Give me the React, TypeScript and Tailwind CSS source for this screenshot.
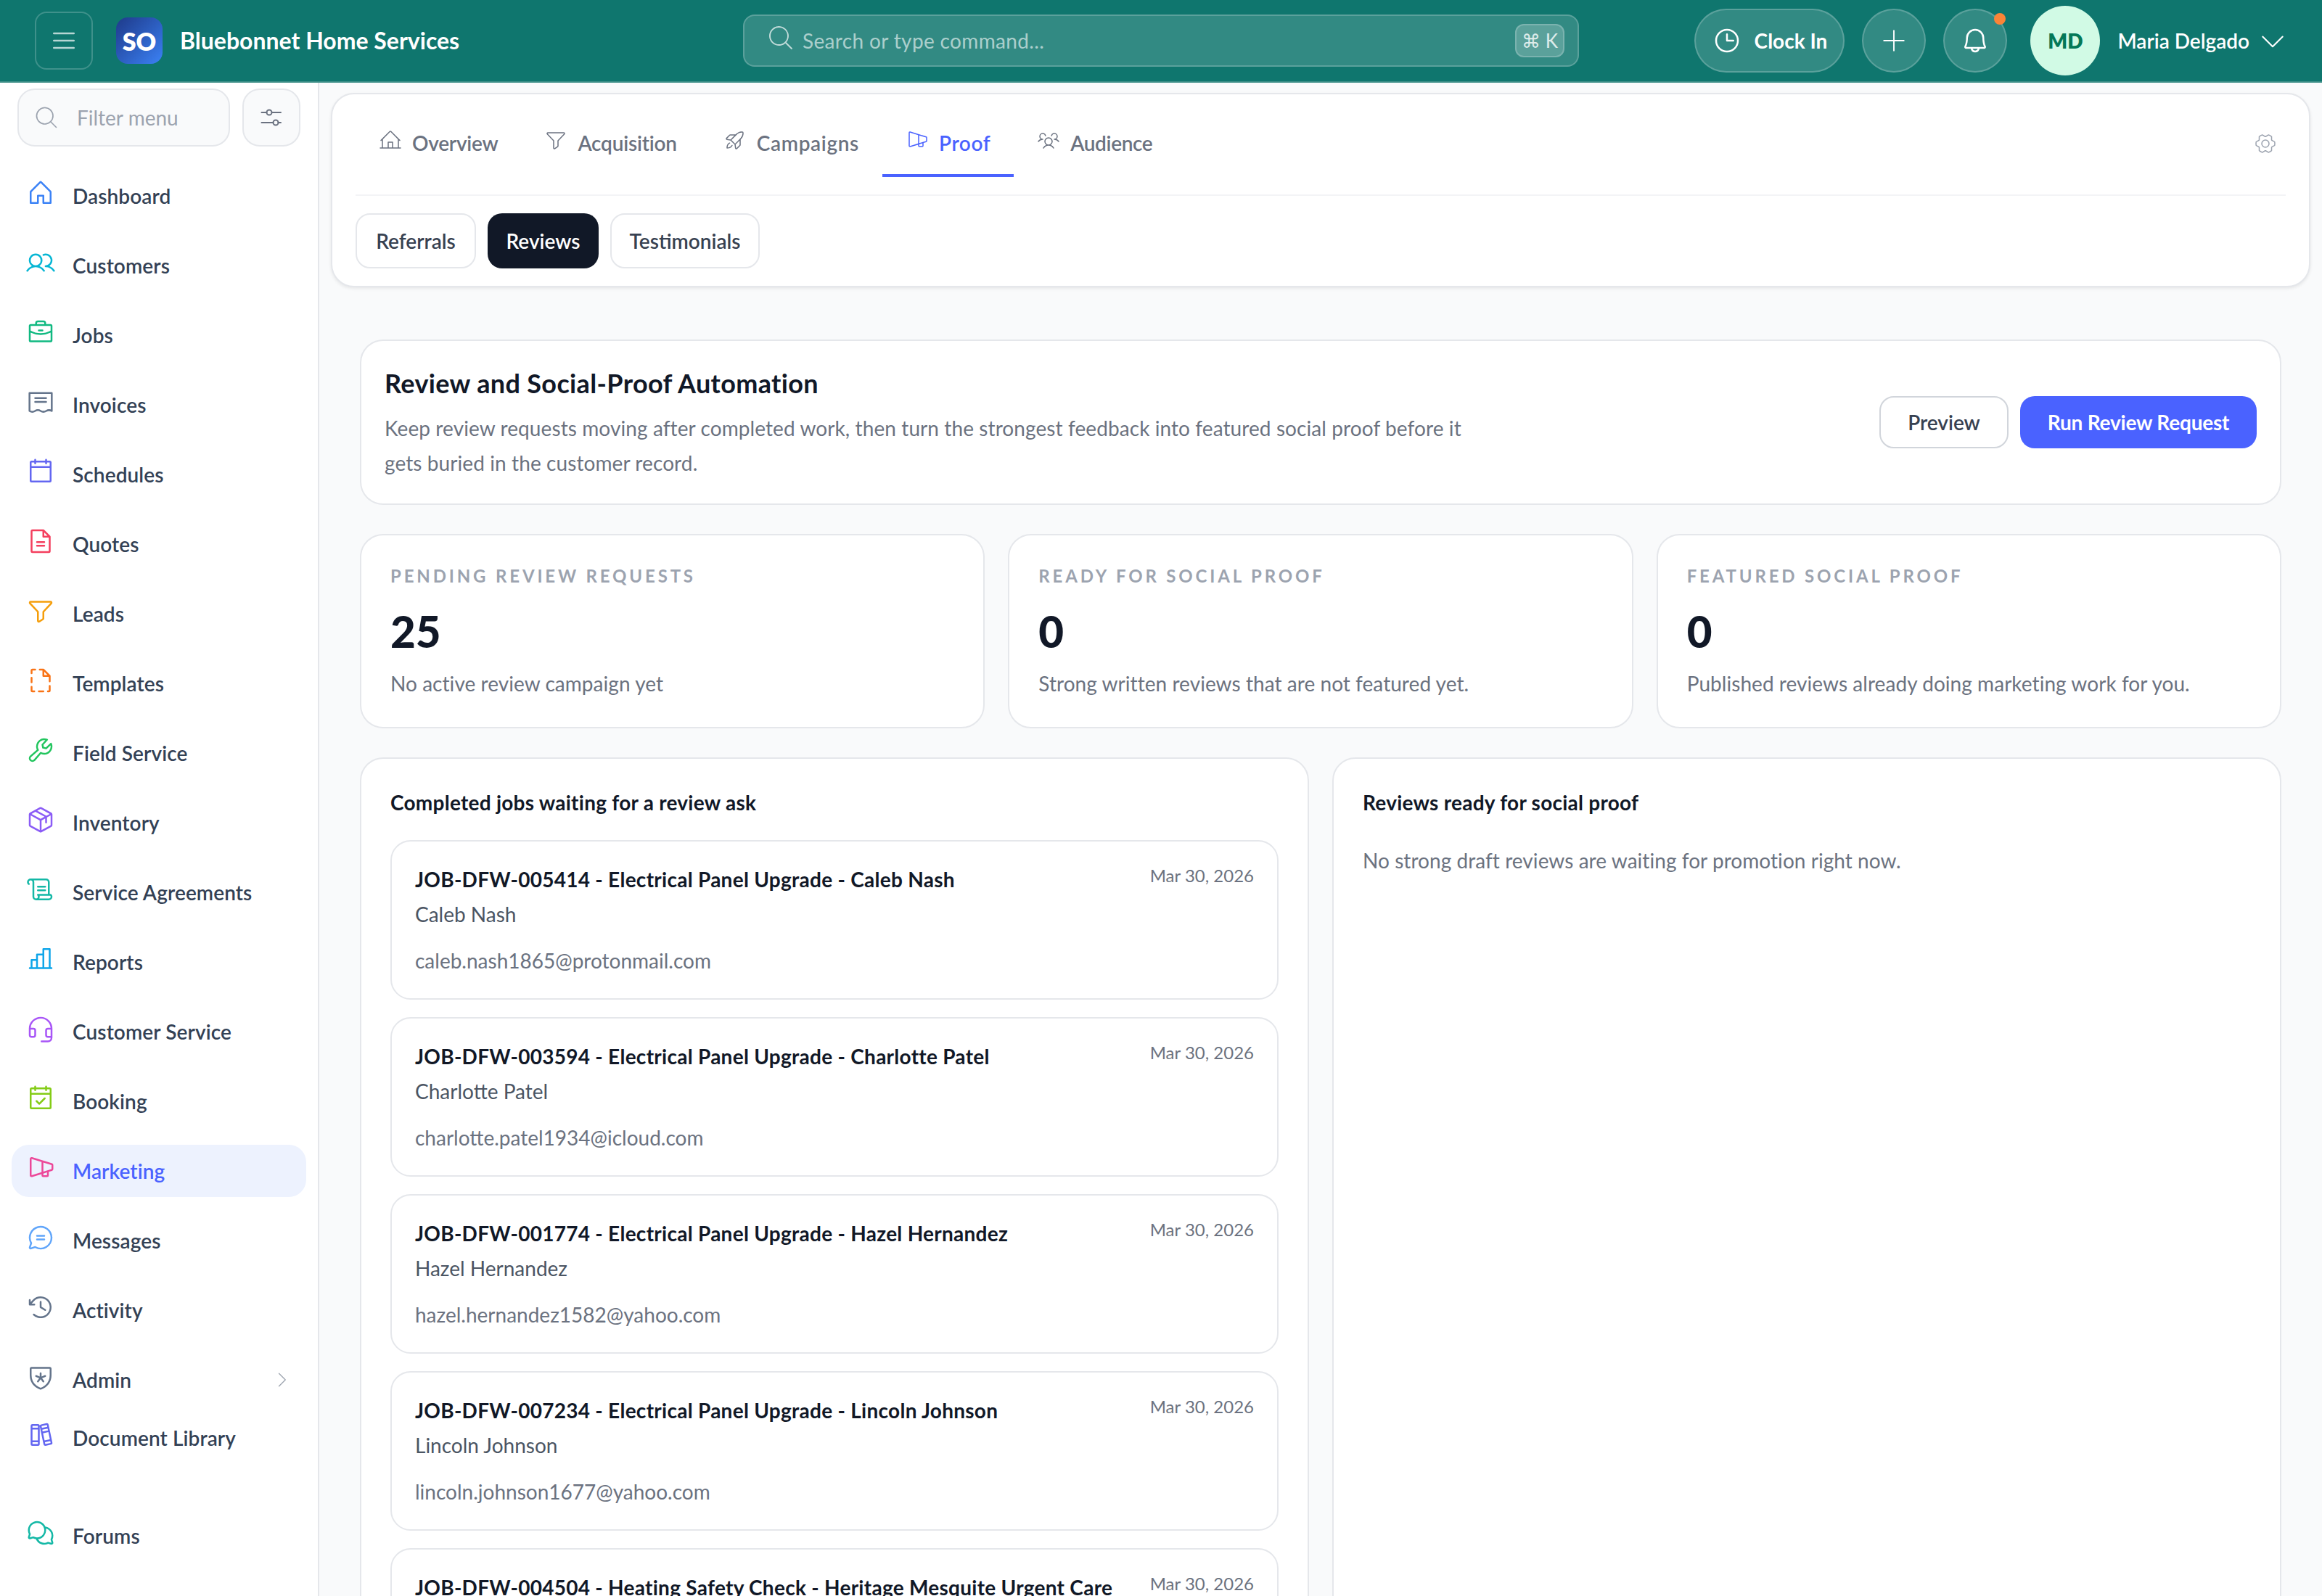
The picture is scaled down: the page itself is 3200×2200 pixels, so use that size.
import type { ComponentType } from "react"
import {
  PiBell,
  PiBooks,
  PiBriefcase,
  PiCalendarBlank,
  PiCalendarCheck,
  PiCaretDownLight,
  PiCaretRightLight,
  PiChartBar,
  PiChatCircleText,
  PiChatsCircle,
  PiClock,
  PiClockCounterClockwise,
  PiFileDashed,
  PiFileText,
  PiFunnel,
  PiFunnelLight,
  PiGearSixLight,
  PiHeadset,
  PiHouse,
  PiHouseLineLight,
  PiList,
  PiMagnifyingGlassLight,
  PiMegaphoneSimple,
  PiMegaphoneSimpleLight,
  PiPackage,
  PiPlusLight,
  PiRocketLaunchLight,
  PiScroll,
  PiShieldStar,
  PiUsers,
  PiUsersThreeLight,
  PiWrench,
} from "react-icons/pi"

type Icon = ComponentType<{ className?: string }>

function InvoiceIcon({ className }: { className?: string }) {
  return (
    <svg viewBox="0 0 24 24" fill="none" stroke="currentColor" strokeWidth="1.5" strokeLinecap="round" strokeLinejoin="round" className={className}>
      <path d="M2.8 19.5V4.6h18.4v14.9c-1.5-.9-3-.9-4.6 0s-3.1.9-4.6 0-3.1-.9-4.6 0-3.1.9-4.6 0Z" />
      <path d="M7.5 8.8h9M7.5 12h9" />
    </svg>
  )
}

function FiltersIcon({ className }: { className?: string }) {
  return (
    <svg viewBox="0 0 32 32" fill="none" stroke="currentColor" strokeWidth="2" strokeLinecap="round" className={className}>
      <path d="M2.5 9h7M16.5 9H29M2.5 23h16M25.5 23H29" />
      <circle cx="13" cy="9" r="3.5" />
      <circle cx="22" cy="23" r="3.5" />
    </svg>
  )
}

const nav: { label: string; icon: Icon; color: string; extra?: string }[] = [
  { label: "Dashboard", icon: PiHouse, color: "text-[#3b82f6]" },
  { label: "Customers", icon: PiUsers, color: "text-[#06b6d4]" },
  { label: "Jobs", icon: PiBriefcase, color: "text-[#10b981]" },
  { label: "Invoices", icon: InvoiceIcon, color: "text-[#64748b]" },
  { label: "Schedules", icon: PiCalendarBlank, color: "text-[#6366f1]" },
  { label: "Quotes", icon: PiFileText, color: "text-[#f43f5e]" },
  { label: "Leads", icon: PiFunnel, color: "text-[#f59e0b]" },
  { label: "Templates", icon: PiFileDashed, color: "text-[#f97316]" },
  { label: "Field Service", icon: PiWrench, color: "text-[#22c55e]" },
  { label: "Inventory", icon: PiPackage, color: "text-[#8b5cf6]" },
  { label: "Service Agreements", icon: PiScroll, color: "text-[#14b8a6]" },
  { label: "Reports", icon: PiChartBar, color: "text-[#0ea5e9]" },
  { label: "Customer Service", icon: PiHeadset, color: "text-[#a855f7]" },
  { label: "Booking", icon: PiCalendarCheck, color: "text-[#84cc16]" },
  { label: "Marketing", icon: PiMegaphoneSimple, color: "text-[#ec4899]" },
  { label: "Messages", icon: PiChatCircleText, color: "text-[#60a5fa]" },
  { label: "Activity", icon: PiClockCounterClockwise, color: "text-[#64748b]" },
  { label: "Admin", icon: PiShieldStar, color: "text-[#64748b]" },
  { label: "Document Library", icon: PiBooks, color: "text-[#6366f1]", extra: "-mt-4" },
  { label: "Forums", icon: PiChatsCircle, color: "text-[#14b8a6]", extra: "mt-[39px]" },
]

const tabs: { label: string; icon: Icon; tracking: string; active?: boolean }[] = [
  { label: "Overview", icon: PiHouseLineLight, tracking: "tracking-[-0.25px]" },
  { label: "Acquisition", icon: PiFunnelLight, tracking: "tracking-[-0.2px]" },
  { label: "Campaigns", icon: PiRocketLaunchLight, tracking: "tracking-[0.65px]" },
  { label: "Proof", icon: PiMegaphoneSimpleLight, tracking: "tracking-[0.6px]", active: true },
  { label: "Audience", icon: PiUsersThreeLight, tracking: "tracking-[-0.35px]" },
]

const stats = [
  { label: "PENDING REVIEW REQUESTS", value: "25", note: "No active review campaign yet" },
  { label: "READY FOR SOCIAL PROOF", value: "0", note: "Strong written reviews that are not featured yet." },
  { label: "FEATURED SOCIAL PROOF", value: "0", note: "Published reviews already doing marketing work for you." },
]

const jobs: { title: string; name?: string; email?: string }[] = [
  { title: "JOB-DFW-005414 - Electrical Panel Upgrade - Caleb Nash", name: "Caleb Nash", email: "caleb.nash1865@protonmail.com" },
  { title: "JOB-DFW-003594 - Electrical Panel Upgrade - Charlotte Patel", name: "Charlotte Patel", email: "charlotte.patel1934@icloud.com" },
  { title: "JOB-DFW-001774 - Electrical Panel Upgrade - Hazel Hernandez", name: "Hazel Hernandez", email: "hazel.hernandez1582@yahoo.com" },
  { title: "JOB-DFW-007234 - Electrical Panel Upgrade - Lincoln Johnson", name: "Lincoln Johnson", email: "lincoln.johnson1677@yahoo.com" },
  { title: "JOB-DFW-004504 - Heating Safety Check - Heritage Mesquite Urgent Care" },
]

function Header() {
  return (
    <header className="flex h-[114px] shrink-0 items-center border-b-2 border-[#3f8f88] bg-[#0f766e] pl-12 pr-[46px]">
      <div className="flex w-[976px] items-center">
        <button className="flex h-20 w-20 items-center justify-center rounded-2xl border-2 border-white/20 text-white/70">
          <PiList className="h-10 w-10" />
        </button>
        <div className="ml-8 flex h-16 w-16 items-center justify-center rounded-2xl bg-gradient-to-br from-[#1e3a8a] to-[#3b82f6] text-[34px] font-extrabold text-white">
          SO
        </div>
        <span className="ml-6 text-[32px] font-bold text-white">Bluebonnet Home Services</span>
      </div>
      <div className="flex h-[72px] w-[1152px] items-center rounded-2xl border-2 border-white/20 bg-white/15 pl-[30px] pr-[18px]">
        <PiMagnifyingGlassLight className="-mt-2 h-10 w-10 text-white/70" />
        <span className="ml-[10px] flex-1 text-[28px] tracking-[0.35px] text-white/60">Search or type command...</span>
        <span className="flex h-[46px] w-[68px] items-center justify-center rounded-xl border-2 border-white/20 bg-white/20 text-[26px] text-white/80">⌘ K</span>
      </div>
      <div className="ml-auto flex items-center">
        <button className="flex h-[88px] w-[207px] items-center justify-center gap-[18px] rounded-full border-2 border-white/20 bg-white/15 text-[28px] font-bold text-white">
          <PiClock className="h-10 w-10" />
          Clock In
        </button>
        <button className="ml-6 flex h-[88px] w-[88px] items-center justify-center rounded-full border-2 border-white/20 bg-white/15 text-white">
          <PiPlusLight className="h-10 w-10" />
        </button>
        <button className="relative ml-6 flex h-[88px] w-[88px] items-center justify-center rounded-full border-2 border-white/20 bg-white/15 text-white">
          <PiBell className="h-10 w-10" />
          <span className="absolute right-0 top-[4px] h-4 w-4 rounded-full bg-[#fb8437]" />
        </button>
        <div className="ml-8 flex h-24 w-24 items-center justify-center rounded-full bg-[#d1fae5] text-[28px] font-extrabold text-[#047857]">MD</div>
        <span className="ml-6 text-[28px] font-semibold text-white">Maria Delgado</span>
        <PiCaretDownLight className="ml-[10px] h-11 w-11 text-white" />
      </div>
    </header>
  )
}

function Sidebar() {
  return (
    <aside className="flex w-[440px] shrink-0 flex-col border-r-2 border-[#e5e7eb] bg-white px-4">
      <div className="mt-2 flex h-20 items-center gap-[17px] px-2">
        <div className="flex h-20 flex-1 items-center gap-6 rounded-3xl border-2 border-[#e5e7eb] bg-[#f9fafb] pl-5 text-[28px] text-[#9ca3af]">
          <PiMagnifyingGlassLight className="h-9 w-9" />
          Filter menu
        </div>
        <button className="flex h-20 w-20 items-center justify-center rounded-3xl border-2 border-[#e5e7eb] bg-[#f9fafb] text-[#6b7280]">
          <FiltersIcon className="h-8 w-8" />
        </button>
      </div>
      <nav className="mt-8 flex flex-col gap-6">
        {nav.map((item) => (
          <div
            key={item.label}
            className={`flex h-[72px] items-center gap-6 rounded-3xl px-5 text-[28px] font-semibold tracking-[0.1px] ${item.extra ?? ""} ${
              item.label === "Marketing" ? "bg-[#edf2fe] text-[#4a62ff]" : "text-[#334155]"
            }`}
          >
            <item.icon className={`-mt-2 h-10 w-10 shrink-0 ${item.color}`} />
            <span className="flex-1">{item.label}</span>
            {item.label === "Admin" && <PiCaretRightLight className="h-7 w-7 text-[#9ca3af]" />}
          </div>
        ))}
      </nav>
    </aside>
  )
}

function TabsCard() {
  return (
    <div className="h-[268px] rounded-[32px] border-2 border-[#e5e7eb] bg-white px-8 shadow-[0_2px_4px_rgba(0,0,0,0.08)]">
      <div className="flex h-[140px] items-start justify-between border-b-2 border-[#f3f4f6]">
        <div className="flex">
          {tabs.map((tab) => (
            <div
              key={tab.label}
              className={`mt-[24px] flex h-[90px] items-center gap-[14px] border-b-4 px-8 text-[28px] font-semibold ${tab.tracking} ${
                tab.active ? "border-[#4a62ff] text-[#4a62ff]" : "border-transparent text-[#6b7280]"
              }`}
            >
              <tab.icon className="-mt-2 h-8 w-8" />
              {tab.label}
            </div>
          ))}
        </div>
        <PiGearSixLight className="mr-3 mt-[52px] h-8 w-8 text-[#9ca3af]" />
      </div>
      <div className="mt-6 flex gap-4">
        <span className="flex h-[76px] w-[166px] items-center justify-center rounded-[20px] border-2 border-[#e5e7eb] text-[28px] font-semibold text-[#374151]">Referrals</span>
        <span className="flex h-[76px] w-[153px] items-center justify-center rounded-[20px] bg-[#111827] text-[28px] font-semibold text-white">Reviews</span>
        <span className="flex h-[76px] w-[206px] items-center justify-center rounded-[20px] border-2 border-[#e5e7eb] text-[28px] font-semibold text-[#374151]">Testimonials</span>
      </div>
    </div>
  )
}

export default function App() {
  return (
    <div className="flex h-[2200px] flex-col overflow-hidden bg-[#f9fafb] [font-family:Lato,sans-serif]">
      <Header />
      <div className="flex min-h-0 flex-1">
        <Sidebar />
        <main className="min-w-0 flex-1 px-4 pt-[14px]">
          <TabsCard />
          <div className="mt-[72px] flex flex-col gap-10 px-10">
            <section className="flex items-center justify-between rounded-[32px] border-2 border-[#e5e7eb] bg-white p-8">
              <div className="w-[1520px]">
                <h1 className="-mt-[2px] text-[36px] font-bold leading-[56px] tracking-[0.35px] text-[#111827]">Review and Social-Proof Automation</h1>
                <p className="mt-[10px] text-[28px] leading-[48px] tracking-[0.09px] text-[#6b7280]">
                  Keep review requests moving after completed work, then turn the strongest feedback into featured social proof before it gets buried in the customer record.
                </p>
              </div>
              <div className="flex gap-4">
                <button className="h-[72px] w-[178px] rounded-[20px] border-2 border-[#d1d5db] bg-white text-[28px] font-semibold text-[#374151]">Preview</button>
                <button className="h-[72px] w-[326px] rounded-[20px] bg-[#4a62ff] text-[28px] font-bold tracking-[-0.2px] text-white">Run Review Request</button>
              </div>
            </section>

            <section className="grid grid-cols-3 gap-8">
              {stats.map((stat) => (
                <div key={stat.label} className="rounded-[32px] border-2 border-[#e5e7eb] bg-white p-10">
                  <p className="text-2xl font-bold leading-8 tracking-[0.16em] text-[#9ca3af]">{stat.label}</p>
                  <p className="mt-6 text-[60px] font-black leading-[72px] text-[#111827]">{stat.value}</p>
                  <p className="mt-4 text-[28px] leading-10 tracking-[0.05px] text-[#6b7280]">{stat.note}</p>
                </div>
              ))}
            </section>

            <section className="grid grid-cols-2 items-start gap-8">
              <div className="rounded-[32px] border-2 border-[#e5e7eb] bg-white p-10">
                <h2 className="-mt-[2px] mb-[30px] text-[28px] font-bold leading-[44px] tracking-[0.25px] text-[#111827]">Completed jobs waiting for a review ask</h2>
                <div className="flex flex-col gap-6">
                  {jobs.map((job) => (
                    <div key={job.title} className="h-[220px] rounded-[28px] border-2 border-[#e5e7eb] bg-white px-8 pt-8">
                      <div className="flex items-start justify-between">
                        <p className="text-[28px] font-bold leading-10 tracking-[0.27px] text-[#111827]">{job.title}</p>
                        <span className="text-2xl leading-[30px] text-[#6b7280]">Mar 30, 2026</span>
                      </div>
                      {job.name && <p className="mt-2 text-[28px] leading-10 text-[#4b5563]">{job.name}</p>}
                      {job.email && <p className="mt-6 text-[28px] leading-10 text-[#6b7280]">{job.email}</p>}
                    </div>
                  ))}
                </div>
              </div>
              <div className="h-[1400px] rounded-[32px] border-2 border-[#e5e7eb] bg-white p-10">
                <h2 className="-mt-[2px] text-[28px] font-bold leading-[44px] tracking-[0.25px] text-[#111827]">Reviews ready for social proof</h2>
                <p className="mt-[38px] text-[28px] leading-10 tracking-[0.05px] text-[#6b7280]">No strong draft reviews are waiting for promotion right now.</p>
              </div>
            </section>
          </div>
        </main>
      </div>
    </div>
  )
}
